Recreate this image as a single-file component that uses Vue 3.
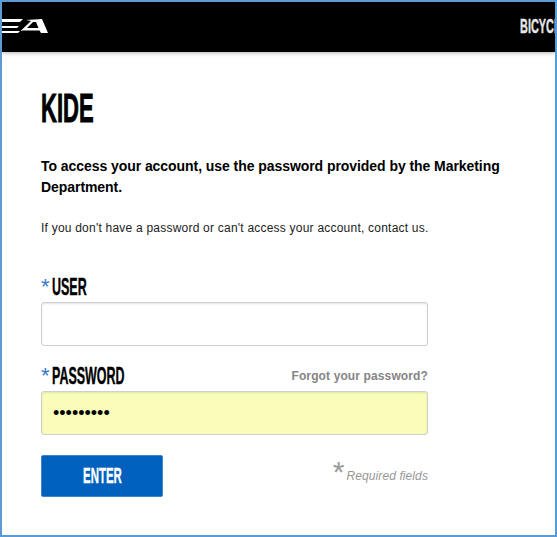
<template>
  <div class="frame">
    <header class="top-bar">
      <svg class="logo" width="48" height="18" viewBox="2 17 48 18">
        <path d="M2 19H23L20 22H2Z" fill="#fff" />
        <path d="M2 26H19L17 28H2Z" fill="#fff" />
        <path d="M2 31H20L18 33H2Z" fill="#fff" />
        <path d="M20.500 31L31 21L26 20L42 19L48 33H41L39.500 30.500H23ZM27 28H38.500L36 22H33Z" fill="#fff" fill-rule="evenodd" />
      </svg>
      <span class="nav-link"><span class="squeeze">BICYCLES</span></span>
    </header>

    <main class="content">
      <h1 class="title"><span class="squeeze">KIDE</span></h1>
      <p class="lead">To access your account, use the password provided by the Marketing Department.</p>
      <p class="note">If you don't have a password or can't access your account, contact us.</p>

      <form class="login" @submit.prevent>
        <div class="label-row">
          <label for="user"><span class="star">*</span><span class="squeeze">USER</span></label>
        </div>
        <input id="user" v-model="user" class="field" type="text" />

        <div class="label-row second">
          <label for="password"><span class="star">*</span><span class="squeeze">PASSWORD</span></label>
          <a class="forgot" href="#">Forgot your password?</a>
        </div>
        <input id="password" v-model="password" class="field filled" type="password" />

        <div class="actions">
          <button class="enter" type="submit"><span class="squeeze">ENTER</span></button>
          <span class="required"><span class="required-star">*</span>Required fields</span>
        </div>
      </form>
    </main>
  </div>
</template>

<script setup>
import { ref } from "vue";

const user = ref("");
const password = ref("123456789");
</script>

<style>
html,
body {
  margin: 0;
  background: #fff;
  overflow: hidden;
}
</style>

<style scoped>
.frame {
  box-sizing: border-box;
  width: 557px;
  height: 537px;
  border: 2px solid #5b9bd5;
  overflow: hidden;
  font-family: "Liberation Sans", Arial, sans-serif;
  color: #000;
  background: #fff;
}
.squeeze {
  display: inline-block;
  transform: scaleX(0.52);
  transform-origin: left center;
  font-weight: 700;
  white-space: nowrap;
  -webkit-text-stroke: 0.4px currentColor;
}
.top-bar {
  display: flex;
  align-items: center;
  justify-content: space-between;
  height: 50px;
  background: #000;
  box-shadow: 0 1px 4px rgba(0, 0, 0, 0.3);
  overflow: hidden;
}
.logo {
  display: block;
  margin-top: -2px;
}
.nav-link {
  width: 35px;
  color: #e6e6e6;
  font-size: 21px;
  line-height: 24px;
  margin-top: -3px;
  overflow: hidden;
}
.content {
  padding: 33px 0 0 39px;
}
.title {
  margin: 0;
  font-size: 40px;
  line-height: 46px;
  height: 46px;
}
.title .squeeze {
  transform: scaleX(0.55);
  -webkit-text-stroke: 1px currentColor;
}
.lead {
  width: 480px;
  margin: 25px 0 0;
  font-size: 14px;
  font-weight: 700;
  line-height: 21px;
  letter-spacing: -0.06px;
}
.note {
  margin: 22px 0 0;
  font-size: 12px;
  line-height: 16px;
  letter-spacing: 0.22px;
  color: #222;
}
.login {
  width: 387px;
  margin-top: 36px;
}
.label-row {
  display: flex;
  justify-content: space-between;
  align-items: center;
  height: 30px;
}
.label-row.second {
  margin-top: 15px;
}
.label-row label {
  display: flex;
  align-items: center;
  font-size: 24px;
  line-height: 30px;
}
.star {
  width: 11px;
  color: #3a78c8;
  font-size: 22px;
  line-height: 30px;
}
.forgot {
  color: #858585;
  font-size: 12px;
  font-weight: 700;
  letter-spacing: 0.12px;
  text-decoration: none;
}
.field {
  box-sizing: border-box;
  display: block;
  width: 387px;
  height: 44px;
  padding: 0 11px;
  border: 1px solid #cfcfcf;
  border-radius: 3px;
  background: #fff;
  box-shadow: inset 0 1px 2px rgba(0, 0, 0, 0.1);
  font-family: inherit;
  font-size: 18px;
  outline: none;
}
.field.filled {
  background: #f9fdb9;
}
.actions {
  display: flex;
  justify-content: space-between;
  align-items: center;
  margin-top: 20px;
}
.enter {
  width: 122px;
  height: 42px;
  padding: 0;
  border: 1px solid #3f84cf;
  border-radius: 2px;
  background: #0060bd;
  color: #fff;
  font-family: inherit;
  font-size: 22px;
  line-height: 24px;
  text-align: left;
  padding-left: 41px;
}
.required {
  color: #999;
  font-size: 12px;
  font-style: italic;
  letter-spacing: 0.1px;
  margin-top: -5px;
}
.required-star {
  font-size: 30px;
  font-style: normal;
  line-height: 16px;
  margin-right: 2px;
  vertical-align: -2px;
}
</style>
